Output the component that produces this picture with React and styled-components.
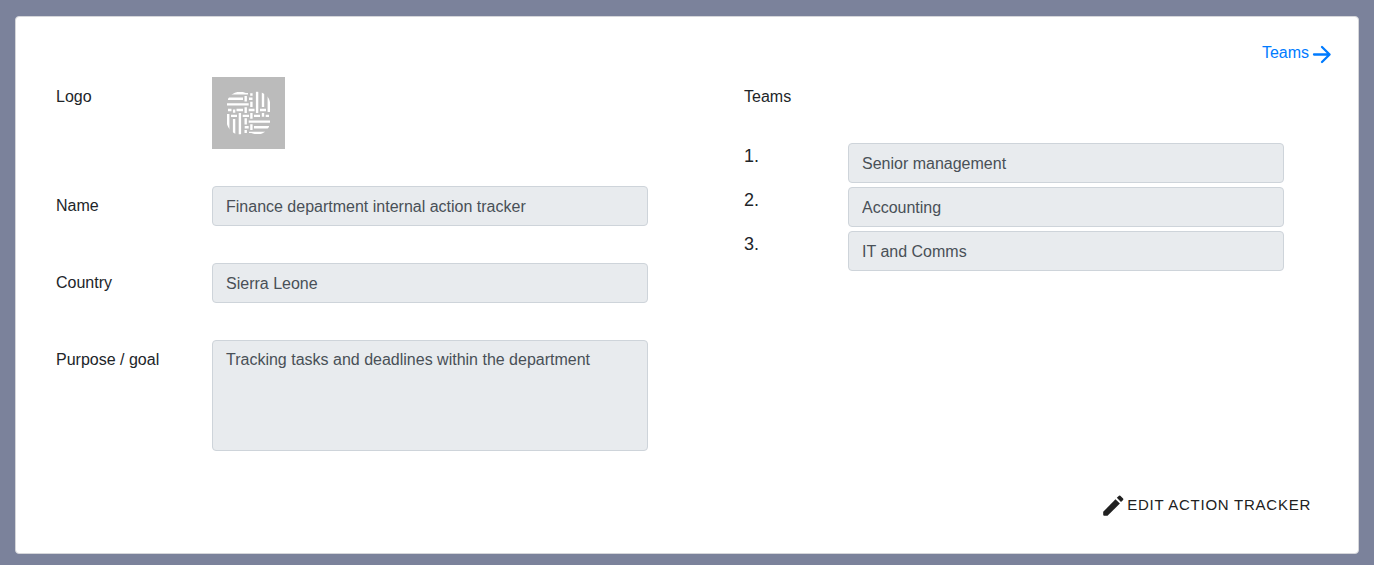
import React from "react";
import styled, { createGlobalStyle } from "styled-components";

const GlobalStyle = createGlobalStyle`
  *, *::before, *::after { box-sizing: border-box; }
  body {
    margin: 0;
    padding: 16px 15px 11px;
    background: #7b829b;
    color: #212529;
    font-family: "Liberation Sans", Arial, sans-serif;
    font-size: 16px;
    line-height: 24px;
  }
`;

const Card = styled.main`
  display: flex;
  flex-direction: column;
  padding: 24px 26px 34px 40px;
  background: #fff;
  border: 1px solid #d5d6da;
  border-radius: 4px;
`;

const TopBar = styled.nav`
  display: flex;
  justify-content: flex-end;
  height: 36px;
`;

const TeamsLink = styled.a`
  display: flex;
  align-items: center;
  height: 24px;
  gap: 1px;
  color: #007bff;
  text-decoration: none;
`;

const Columns = styled.div`
  display: grid;
  grid-template-columns: minmax(0, 592fr) minmax(0, 540fr);
  column-gap: 96px;
  padding-right: 48px;
`;

const Form = styled.form`
  display: flex;
  flex-direction: column;
  gap: 37px;
`;

const FormRow = styled.div`
  display: grid;
  grid-template-columns: 156px minmax(0, 1fr);
`;

const Label = styled.label`
  padding-top: 8px;
`;

const Heading = styled.h2`
  margin: 0;
  padding-top: 8px;
  font-size: 16px;
  font-weight: 400;
  line-height: 24px;
`;

const Field = styled.input`
  display: block;
  width: 100%;
  height: 40px;
  padding: 7px 13px 6px;
  font: inherit;
  color: #495057;
  background: #e8ebee;
  border: 1px solid #ced4da;
  border-radius: 4px;
  outline: none;
`;

const TextArea = styled(Field).attrs({ as: "textarea" })`
  height: 111px;
  resize: none;
`;

const TeamList = styled.ol`
  display: flex;
  flex-direction: column;
  gap: 4px;
  margin: 34px 0 0;
  padding: 0;
  list-style: none;
`;

const TeamRow = styled.li`
  display: grid;
  grid-template-columns: 104px minmax(0, 1fr);
`;

const TeamNumber = styled.label`
  font-size: 18px;
  line-height: 26px;
`;

const Footer = styled.footer`
  display: flex;
  justify-content: flex-end;
  margin-top: 40px;
  padding-right: 21px;
`;

const EditButton = styled.button`
  display: flex;
  align-items: center;
  gap: 3px;
  padding: 0;
  font: inherit;
  font-size: 15px;
  line-height: 28px;
  letter-spacing: 0.05em;
  text-transform: uppercase;
  color: #212121;
  background: none;
  border: 0;
  cursor: pointer;
`;

const logoBars = [
  "M19 16.2H36 M16 21.8H31 M37 21.8H40.5 M15 27.4H36.7",
  "M16 33H19.5 M24.5 33H31 M36.7 33H42.5 M48 33H54",
  "M19 38.9H25 M30.7 38.9H37 M42 38.9H48 M53.7 38.9H57",
  "M36.7 44.6H58 M32.7 50.2H36.7 M42 50.2H57 M37 55.9H53",
  "M16.2 37V53 M22.1 32.5V35.7 M22.1 42V57 M27.9 36V58",
  "M33.7 19V24.5 M33.7 30.3V36 M33.7 41.3V47.5 M33.7 53V56",
  "M39.4 16.3V18.7 M39.4 24.7V30 M39.4 36V41.7 M39.4 47.3V53",
  "M45.1 14V36 M51 15V30 M51 36V39.7 M56.8 19V35",
];

function Logo() {
  return (
    <svg width="73" height="72" viewBox="0 0 73 72" role="img" aria-label="Logo">
      <defs>
        <clipPath id="quatrefoil">
          <circle cx="28" cy="28" r="13.3" />
          <circle cx="45" cy="28" r="13.3" />
          <circle cx="28" cy="44" r="13.3" />
          <circle cx="45" cy="44" r="13.3" />
          <rect x="28" y="16" width="17" height="40" />
          <rect x="15" y="28" width="43" height="16" />
        </clipPath>
      </defs>
      <rect width="73" height="72" fill="#bbb" />
      <path d={logoBars.join(" ")} stroke="#fff" strokeWidth="2.4" fill="none" clipPath="url(#quatrefoil)" />
    </svg>
  );
}

function ArrowIcon() {
  return (
    <svg width="22" height="24" viewBox="0 0 22 24" fill="none" stroke="currentColor" strokeWidth="2.3" strokeLinecap="round" strokeLinejoin="round" aria-hidden="true">
      <path d="M4 13.5H19.5M12 6L19.6 13.5L12 21" />
    </svg>
  );
}

function PencilIcon() {
  return (
    <svg width="21" height="21" viewBox="0 0 21 21" fill="currentColor" aria-hidden="true">
      <path d="M0.2 16.8L12.5 4.2L16.9 8.5L4.5 20.8H1.2Q0.2 20.8 0.2 19.8Z" />
      <path d="M13.8 2.8L16 0.7Q16.7 0.1 17.3 0.7L20.1 3.5Q20.7 4.2 20.1 4.9L18 7Z" />
    </svg>
  );
}

const teams = ["Senior management", "Accounting", "IT and Comms"];

export default function App() {
  return (
    <>
      <GlobalStyle />
      <Card>
        <TopBar>
          <TeamsLink href="#teams">
            Teams
            <ArrowIcon />
          </TeamsLink>
        </TopBar>
        <Columns>
          <Form>
            <FormRow>
              <Label as="span">Logo</Label>
              <Logo />
            </FormRow>
            <FormRow>
              <Label htmlFor="name">Name</Label>
              <Field id="name" readOnly value="Finance department internal action tracker" />
            </FormRow>
            <FormRow>
              <Label htmlFor="country">Country</Label>
              <Field id="country" readOnly value="Sierra Leone" />
            </FormRow>
            <FormRow>
              <Label htmlFor="purpose">Purpose / goal</Label>
              <TextArea id="purpose" readOnly value="Tracking tasks and deadlines within the department" />
            </FormRow>
          </Form>
          <section id="teams">
            <Heading>Teams</Heading>
            <TeamList>
              {teams.map((team, i) => (
                <TeamRow key={team}>
                  <TeamNumber htmlFor={`team-${i}`}>{i + 1}.</TeamNumber>
                  <Field id={`team-${i}`} readOnly value={team} />
                </TeamRow>
              ))}
            </TeamList>
          </section>
        </Columns>
        <Footer>
          <EditButton type="button">
            <PencilIcon />
            Edit action tracker
          </EditButton>
        </Footer>
      </Card>
    </>
  );
}
